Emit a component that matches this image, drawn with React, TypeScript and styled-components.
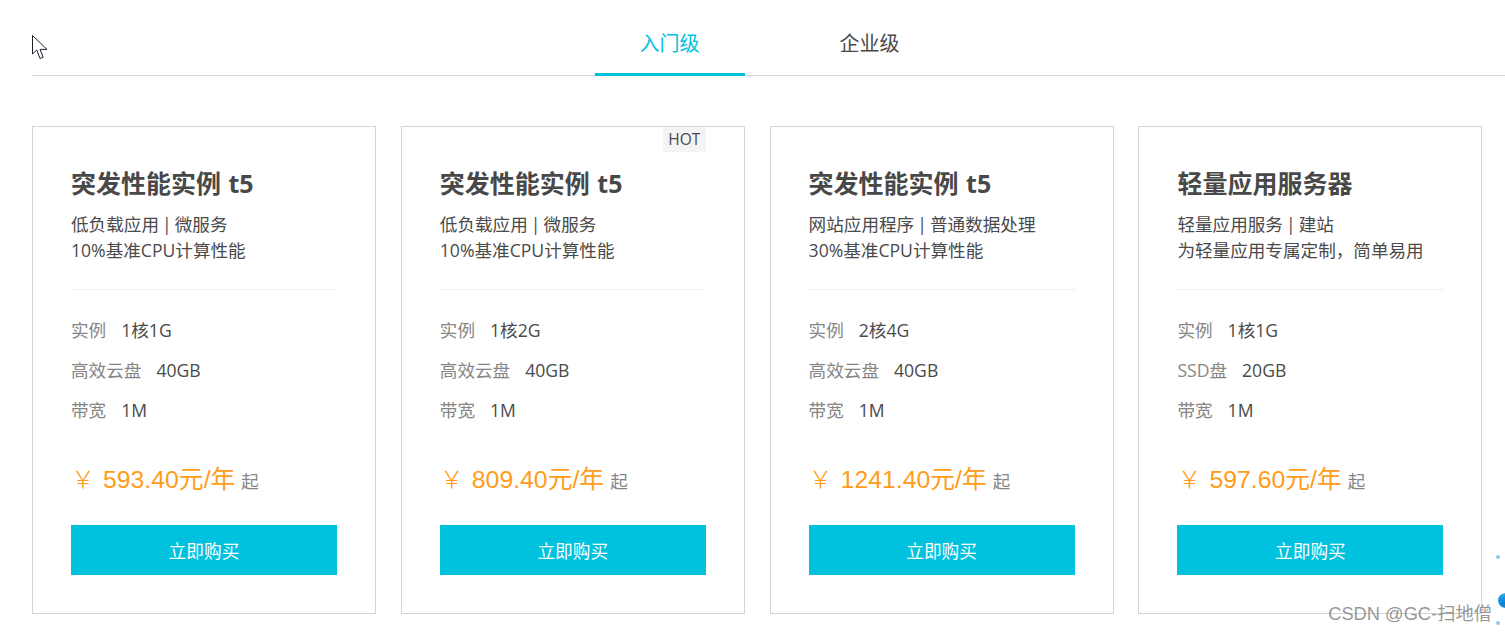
import * as React from "react";
import styled, { createGlobalStyle } from "styled-components";

const GlobalStyle = createGlobalStyle`
  html, body {
    margin: 0;
    background: #fff;
    overflow: hidden;
  }
  body {
    font-family: "Open Sans", "Noto Sans CJK SC", sans-serif;
  }
`;

const Page = styled.div`
  position: relative;
  width: 1505px;
  height: 632px;
  padding-left: 32px;
  box-sizing: border-box;
  overflow: hidden;
`;

const TabBar = styled.div`
  display: flex;
  gap: 50px;
  height: 76px;
  padding-left: 563px;
  box-sizing: border-box;
  border-bottom: 1px solid #d8d8d8;
`;

const Tab = styled.div<{ active?: boolean }>`
  width: 150px;
  height: 76px;
  box-sizing: border-box;
  padding: 29px 1px 0 0;
  text-align: center;
  font-size: 20px;
  line-height: 29px;
  color: ${props => (props.active ? "#00c1de" : "#4a4a4a")};
  border-bottom: 3px solid ${props => (props.active ? "#00c1de" : "transparent")};
`;

const CardGrid = styled.div`
  display: grid;
  grid-template-columns: repeat(4, 344px);
  column-gap: 24.8px;
  margin-top: 50px;
`;

const Card = styled.div`
  position: relative;
  height: 488px;
  box-sizing: border-box;
  padding: 38px 38px 0;
  border: 1px solid #d5d5d5;
`;

const HotBadge = styled.span`
  position: absolute;
  top: 0;
  right: 38px;
  width: 43px;
  height: 25px;
  background: #f4f4f4;
  color: #4a4a4a;
  font-size: 15.5px;
  line-height: 25px;
  text-align: center;
`;

const Title = styled.h3`
  margin: 0;
  height: 38px;
  font-size: 25px;
  line-height: 36px;
  font-weight: 700;
  word-spacing: 1px;
  color: #484848;
  white-space: nowrap;
`;

const Desc = styled.p`
  margin: 8px 0 0;
  padding-bottom: 26px;
  border-bottom: 1px solid #efefef;
  font-size: 17.6px;
  line-height: 26px;
  word-spacing: -1.5px;
  color: #4a4a4a;
  white-space: nowrap;
`;

const Specs = styled.div`
  display: flex;
  flex-direction: column;
  gap: 10px;
  margin-top: 25px;
`;

const Spec = styled.div`
  display: flex;
  gap: 15px;
  height: 30px;
  font-size: 17.6px;
  line-height: 30px;
  white-space: nowrap;
`;

const SpecLabel = styled.span`
  color: #868686;
`;

const SpecValue = styled.span`
  color: #4a4a4a;
`;

const PriceRow = styled.div`
  display: flex;
  align-items: baseline;
  height: 40px;
  margin-top: 34px;
  white-space: nowrap;
`;

const Yen = styled.span`
  width: 32px;
  font-size: 24px;
  font-weight: 300;
  color: #ff9c1a;
`;

const Price = styled.span`
  font-family: "Liberation Sans", "Noto Sans CJK SC", sans-serif;
  font-size: 24.8px;
  color: #ff9c1a;
`;

const From = styled.span`
  margin-left: 6px;
  font-size: 17.6px;
  color: #868686;
`;

const BuyButton = styled.button`
  display: block;
  width: 100%;
  height: 50px;
  margin-top: 26px;
  padding: 0;
  border: 0;
  background: #00c1de;
  color: #fff;
  font-family: inherit;
  font-size: 17.7px;
`;

const Watermark = styled.div`
  position: absolute;
  right: 13px;
  bottom: 6px;
  font-family: "Liberation Sans", "Noto Sans CJK SC", sans-serif;
  font-size: 18.3px;
  line-height: 24px;
  color: rgba(110, 110, 110, 0.72);
  white-space: nowrap;
`;

const Dot = styled.i<{ top: number }>`
  position: absolute;
  right: 5px;
  top: ${props => props.top}px;
  width: 4px;
  height: 4px;
  border-radius: 50%;
  background: #1b93dc;
  opacity: 0.5;
`;

const Sphere = styled.i`
  position: absolute;
  right: -8px;
  top: 593px;
  width: 15px;
  height: 15px;
  border-radius: 50%;
  background: radial-gradient(circle at 40% 70%, #0a7fd0, #1ba0ea 60%, #8fd0f5);
`;

const CursorIcon = styled.svg`
  position: absolute;
  left: 32px;
  top: 35px;
`;

const plans = [
  {
    title: "突发性能实例 t5",
    lines: ["低负载应用 | 微服务", "10%基准CPU计算性能"],
    specs: [["实例", "1核1G"], ["高效云盘", "40GB"], ["带宽", "1M"]],
    price: "593.40元/年",
  },
  {
    title: "突发性能实例 t5",
    lines: ["低负载应用 | 微服务", "10%基准CPU计算性能"],
    specs: [["实例", "1核2G"], ["高效云盘", "40GB"], ["带宽", "1M"]],
    price: "809.40元/年",
    hot: true,
  },
  {
    title: "突发性能实例 t5",
    lines: ["网站应用程序 | 普通数据处理", "30%基准CPU计算性能"],
    specs: [["实例", "2核4G"], ["高效云盘", "40GB"], ["带宽", "1M"]],
    price: "1241.40元/年",
  },
  {
    title: "轻量应用服务器",
    lines: ["轻量应用服务 | 建站", "为轻量应用专属定制，简单易用"],
    specs: [["实例", "1核1G"], ["SSD盘", "20GB"], ["带宽", "1M"]],
    price: "597.60元/年",
  },
];

const App = () => (
  <Page>
    <GlobalStyle />
    <CursorIcon width="16" height="25" viewBox="0 0 16 25">
      <path
        d="M0.5 0.5V19L4.8 15L8 23.5L11.2 22.2L8 14.4H15Z"
        fill="#fff"
        stroke="#20202a"
        strokeWidth="1"
      />
    </CursorIcon>
    <TabBar>
      <Tab active>入门级</Tab>
      <Tab>企业级</Tab>
    </TabBar>
    <CardGrid>
      {plans.map((plan, i) => (
        <Card key={i}>
          {plan.hot ? <HotBadge>HOT</HotBadge> : null}
          <Title>{plan.title}</Title>
          <Desc>
            {plan.lines[0]}
            <br />
            {plan.lines[1]}
          </Desc>
          <Specs>
            {plan.specs.map(([label, value]) => (
              <Spec key={label}>
                <SpecLabel>{label}</SpecLabel>
                <SpecValue>{value}</SpecValue>
              </Spec>
            ))}
          </Specs>
          <PriceRow>
            <Yen>￥</Yen>
            <Price>{plan.price}</Price>
            <From>起</From>
          </PriceRow>
          <BuyButton>立即购买</BuyButton>
        </Card>
      ))}
    </CardGrid>
    <Dot top={555} />
    <Sphere />
    <Dot top={621} />
    <Watermark>CSDN @GC-扫地僧</Watermark>
  </Page>
);

export default App;
